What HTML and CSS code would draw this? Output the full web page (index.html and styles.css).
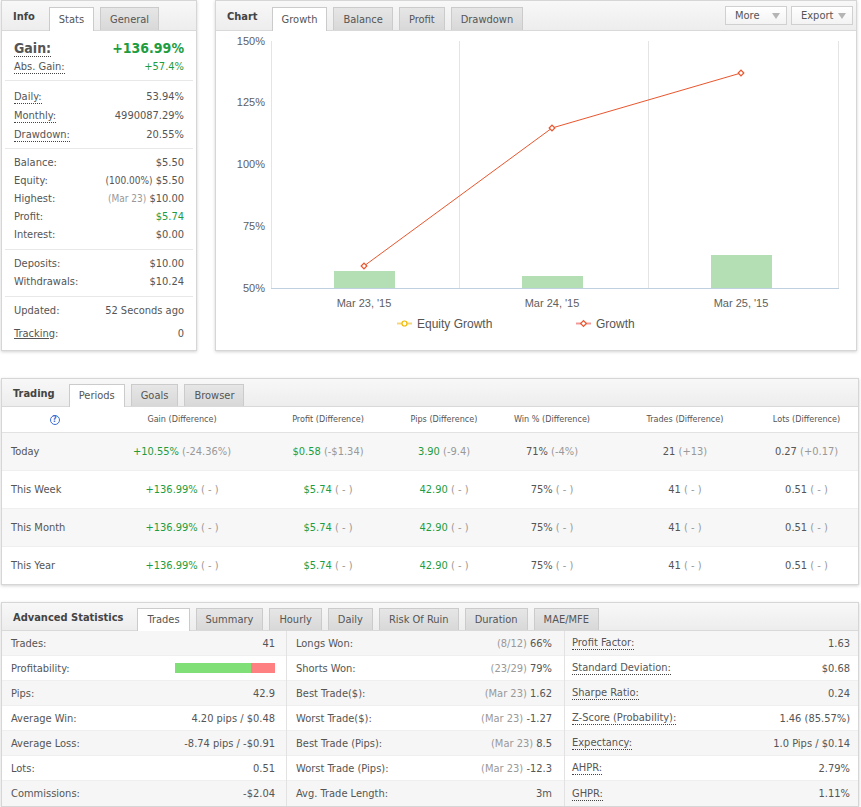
FILE: index.html
```html
<!DOCTYPE html>
<html lang="en">

<head>
    <meta charset="UTF-8">
    <meta name="viewport" content="width=device-width, initial-scale=1.0">
    <title>Account</title>
    <link rel="stylesheet" href="styles.css">
</head>

<body>
    <div class="page">
        <div class="top">
            <div class="panel info">
                <div class="head">
                    <span class="title">Info</span>
                    <span class="tab active">Stats</span>
                    <span class="tab">General</span>
                </div>
                <div class="group g1">
                    <div class="row gain"><span class="lbl dot">Gain:</span><span class="green">+136.99%</span></div>
                    <div class="row"><span class="lbl dot">Abs. Gain:</span><span class="green">+57.4%</span></div>
                </div>
                <div class="group g2">
                    <div class="row"><span class="lbl dot">Daily:</span><span>53.94%</span></div>
                    <div class="row"><span class="lbl dot">Monthly:</span><span>4990087.29%</span></div>
                    <div class="row"><span class="lbl dot">Drawdown:</span><span>20.55%</span></div>
                </div>
                <div class="group">
                    <div class="row"><span class="lbl">Balance:</span><span>$5.50</span></div>
                    <div class="row"><span class="lbl">Equity:</span><span><small>(100.00%)</small> $5.50</span></div>
                    <div class="row"><span class="lbl">Highest:</span><span><small class="muted">(Mar 23)</small> $10.00</span></div>
                    <div class="row"><span class="lbl">Profit:</span><span class="green">$5.74</span></div>
                    <div class="row"><span class="lbl">Interest:</span><span>$0.00</span></div>
                </div>
                <div class="group">
                    <div class="row"><span class="lbl">Deposits:</span><span>$10.00</span></div>
                    <div class="row"><span class="lbl">Withdrawals:</span><span>$10.24</span></div>
                </div>
                <div class="group last">
                    <div class="row"><span class="lbl">Updated:</span><span>52 Seconds ago</span></div>
                    <div class="row track"><span class="lbl under">Tracking</span><span>0</span></div>
                </div>
            </div>

            <div class="panel chart">
                <div class="head">
                    <span class="title">Chart</span>
                    <span class="tab active">Growth</span>
                    <span class="tab">Balance</span>
                    <span class="tab">Profit</span>
                    <span class="tab">Drawdown</span>
                    <div class="tools">
                        <span class="btn">More <i class="arrow"></i></span>
                        <span class="btn">Export <i class="arrow"></i></span>
                    </div>
                </div>
                <svg class="plot" width="640" height="318" viewBox="0 0 640 318">
                    <g stroke="#e4e4e4" stroke-width="1">
                        <line x1="55.5" y1="10" x2="55.5" y2="257" />
                        <line x1="243.5" y1="10" x2="243.5" y2="257" />
                        <line x1="432.5" y1="10" x2="432.5" y2="257" />
                        <line x1="622.5" y1="10" x2="622.5" y2="257" />
                    </g>
                    <g fill="#b4dfb4">
                        <rect x="118" y="240" width="61" height="17" />
                        <rect x="306" y="245" width="61" height="12" />
                        <rect x="495" y="224" width="61" height="33" />
                    </g>
                    <line x1="55" y1="257.5" x2="623" y2="257.5" stroke="#c0d0e0" />
                    <g class="ylab" text-anchor="end">
                        <text x="49" y="14">150%</text>
                        <text x="49" y="75">125%</text>
                        <text x="49" y="137">100%</text>
                        <text x="49" y="199">75%</text>
                        <text x="49" y="261">50%</text>
                    </g>
                    <polyline points="148,235 336,97 525,42" fill="none" stroke="#e8562e" stroke-width="1" />
                    <g fill="#fff" stroke="#e8562e" stroke-width="1.2">
                        <rect x="146" y="233" width="4" height="4" transform="rotate(45 148 235)" />
                        <rect x="334" y="95" width="4" height="4" transform="rotate(45 336 97)" />
                        <rect x="523" y="40" width="4" height="4" transform="rotate(45 525 42)" />
                    </g>
                    <g class="xlab" text-anchor="middle">
                        <text x="148" y="276">Mar 23, '15</text>
                        <text x="336" y="276">Mar 24, '15</text>
                        <text x="525" y="276">Mar 25, '15</text>
                    </g>
                    <g class="legend">
                        <line x1="181" y1="292.5" x2="196" y2="292.5" stroke="#f7d67a" stroke-width="2" />
                        <circle cx="188.5" cy="292.5" r="2.5" fill="#fff" stroke="#f2b900" stroke-width="1.2" />
                        <text x="201" y="297">Equity Growth</text>
                        <line x1="360" y1="292.5" x2="375" y2="292.5" stroke="#f29a9a" stroke-width="2" />
                        <rect x="365.5" y="290.5" width="4" height="4" fill="#fff" stroke="#e8562e" stroke-width="1.2" transform="rotate(45 367.5 292.5)" />
                        <text x="380" y="297">Growth</text>
                    </g>
                </svg>
            </div>
        </div>

        <div class="panel trading">
            <div class="head small">
                <span class="title">Trading</span>
                <span class="tab active">Periods</span>
                <span class="tab">Goals</span>
                <span class="tab">Browser</span>
            </div>
            <table class="periods">
                <colgroup>
                    <col style="width:105px">
                    <col style="width:150px">
                    <col style="width:142px">
                    <col style="width:90px">
                    <col style="width:126px">
                    <col style="width:140px">
                    <col style="width:103px">
                </colgroup>
                <thead>
                    <tr>
                        <th><span class="help">?</span></th>
                        <th>Gain (Difference)</th>
                        <th>Profit (Difference)</th>
                        <th>Pips (Difference)</th>
                        <th>Win % (Difference)</th>
                        <th>Trades (Difference)</th>
                        <th>Lots (Difference)</th>
                    </tr>
                </thead>
                <tbody>
                    <tr>
                        <td>Today</td>
                        <td><span class="green">+10.55%</span> <span class="muted">(-24.36%)</span></td>
                        <td><span class="green">$0.58</span> <span class="muted">(-$1.34)</span></td>
                        <td><span class="green">3.90</span> <span class="muted">(-9.4)</span></td>
                        <td>71% <span class="muted">(-4%)</span></td>
                        <td>21 <span class="muted">(+13)</span></td>
                        <td>0.27 <span class="muted">(+0.17)</span></td>
                    </tr>
                    <tr>
                        <td>This Week</td>
                        <td><span class="green">+136.99%</span> <span class="muted">( - )</span></td>
                        <td><span class="green">$5.74</span> <span class="muted">( - )</span></td>
                        <td><span class="green">42.90</span> <span class="muted">( - )</span></td>
                        <td>75% <span class="muted">( - )</span></td>
                        <td>41 <span class="muted">( - )</span></td>
                        <td>0.51 <span class="muted">( - )</span></td>
                    </tr>
                    <tr>
                        <td>This Month</td>
                        <td><span class="green">+136.99%</span> <span class="muted">( - )</span></td>
                        <td><span class="green">$5.74</span> <span class="muted">( - )</span></td>
                        <td><span class="green">42.90</span> <span class="muted">( - )</span></td>
                        <td>75% <span class="muted">( - )</span></td>
                        <td>41 <span class="muted">( - )</span></td>
                        <td>0.51 <span class="muted">( - )</span></td>
                    </tr>
                    <tr>
                        <td>This Year</td>
                        <td><span class="green">+136.99%</span> <span class="muted">( - )</span></td>
                        <td><span class="green">$5.74</span> <span class="muted">( - )</span></td>
                        <td><span class="green">42.90</span> <span class="muted">( - )</span></td>
                        <td>75% <span class="muted">( - )</span></td>
                        <td>41 <span class="muted">( - )</span></td>
                        <td>0.51 <span class="muted">( - )</span></td>
                    </tr>
                </tbody>
            </table>
        </div>

        <div class="panel advanced">
            <div class="head small">
                <span class="title">Advanced Statistics</span>
                <span class="tab active">Trades</span>
                <span class="tab">Summary</span>
                <span class="tab">Hourly</span>
                <span class="tab">Daily</span>
                <span class="tab">Risk Of Ruin</span>
                <span class="tab">Duration</span>
                <span class="tab">MAE/MFE</span>
            </div>
            <div class="stats">
                <div class="col">
                    <div class="line"><span>Trades:</span><span>41</span></div>
                    <div class="line"><span>Profitability:</span><span class="bar"><i class="win"></i><i class="loss"></i></span></div>
                    <div class="line"><span>Pips:</span><span>42.9</span></div>
                    <div class="line"><span>Average Win:</span><span>4.20 pips / $0.48</span></div>
                    <div class="line"><span>Average Loss:</span><span>-8.74 pips / -$0.91</span></div>
                    <div class="line"><span>Lots:</span><span>0.51</span></div>
                    <div class="line"><span>Commissions:</span><span>-$2.04</span></div>
                </div>
                <div class="col">
                    <div class="line"><span>Longs Won:</span><span><span class="muted">(8/12)</span> 66%</span></div>
                    <div class="line"><span>Shorts Won:</span><span><span class="muted">(23/29)</span> 79%</span></div>
                    <div class="line"><span>Best Trade($):</span><span><span class="muted">(Mar 23)</span> 1.62</span></div>
                    <div class="line"><span>Worst Trade($):</span><span><span class="muted">(Mar 23)</span> -1.27</span></div>
                    <div class="line"><span>Best Trade (Pips):</span><span><span class="muted">(Mar 23)</span> 8.5</span></div>
                    <div class="line"><span>Worst Trade (Pips):</span><span><span class="muted">(Mar 23)</span> -12.3</span></div>
                    <div class="line"><span>Avg. Trade Length:</span><span>3m</span></div>
                </div>
                <div class="col">
                    <div class="line"><span class="dot">Profit Factor:</span><span>1.63</span></div>
                    <div class="line"><span class="dot">Standard Deviation:</span><span>$0.68</span></div>
                    <div class="line"><span class="dot">Sharpe Ratio:</span><span>0.24</span></div>
                    <div class="line"><span class="dot">Z-Score (Probability):</span><span>1.46 (85.57%)</span></div>
                    <div class="line"><span class="dot">Expectancy:</span><span>1.0 Pips / $0.14</span></div>
                    <div class="line"><span class="dot">AHPR:</span><span>2.79%</span></div>
                    <div class="line"><span class="dot">GHPR:</span><span>1.11%</span></div>
                </div>
            </div>
        </div>
    </div>
</body>

</html>
```

FILE: styles.css
```css
* {
    margin: 0;
    padding: 0;
    box-sizing: border-box;
}

body {
    font-family: "DejaVu Sans Condensed", "DejaVu Sans", sans-serif;
    font-stretch: condensed;
    font-size: 11px;
    color: #555;
    background: #fff;
}

.page {
    width: 861px;
    padding: 0 2px 0 1px;
}

.top {
    display: flex;
    gap: 18px;
    align-items: flex-start;
}

.panel {
    background: #fff;
    border: 1px solid #d6d6d6;
    box-shadow: 0 1px 3px rgba(0, 0, 0, .18);
}

.info {
    width: 196px;
    height: 351px;
}

.chart {
    width: 642px;
    height: 351px;
}

/* panel header with tabs */
.head {
    display: flex;
    align-items: flex-end;
    height: 30px;
    padding-left: 11px;
    background: linear-gradient(#f8f8f8, #ededed);
    border-bottom: 1px solid #d9d9d9;
}

.head.small {
    height: 28px;
}

.title {
    line-height: 24px;
    margin-bottom: 1px;
    font-weight: bold;
    color: #444;
    margin-right: 14px;
}

.head.small .title {
    line-height: 22px;
}

.tab {
    height: 23px;
    line-height: 23px;
    padding: 0 9px;
    margin-right: 6px;
    background: linear-gradient(#e6e6e6, #d8d8d8);
    border: 1px solid #cbcbcb;
    border-bottom: 0;
    color: #555;
}

.head.small .tab {
    height: 22px;
    line-height: 22px;
}

.tab.active {
    background: #fff;
    height: 24px;
    margin-bottom: -1px;
}

.head.small .tab.active {
    height: 23px;
}

.tools {
    display: flex;
    gap: 4px;
    margin-left: auto;
    align-self: center;
    margin-right: 3px;
}

.btn {
    display: flex;
    align-items: center;
    justify-content: space-between;
    width: 62px;
    height: 19px;
    padding: 0 6px 0 9px;
    background: linear-gradient(#fff, #f3f3f3);
    border: 1px solid #d0d0d0;
    color: #555;
}

.arrow {
    width: 0;
    height: 0;
    border-left: 4px solid transparent;
    border-right: 4px solid transparent;
    border-top: 6px solid #b5b5b5;
}

/* info panel */
.group {
    padding: 5px 0;
    margin: 0 3px;
    border-bottom: 1px solid #e8e8e8;
}

.group.g1 {
    padding: 7px 0 4px;
}

.group.g2 {
    padding: 6px 0 4px;
}

.group.g2 .row {
    line-height: 19px;
}

.group.last {
    border-bottom: 0;
}

.row {
    display: flex;
    justify-content: space-between;
    line-height: 18px;
    padding: 0 9px;
}

.row.gain {
    font-size: 14px;
    font-weight: bold;
    line-height: 20px;
}

.row.track {
    margin-top: 5px;
}

.lbl {
    color: #555;
}

.dot {
    border-bottom: 1px dotted #444;
}

.row .dot {
    line-height: 13px;
    align-self: center;
}

.row.gain .dot {
    line-height: 16px;
}

.under {
    text-decoration: underline;
}

.under::after {
    content: ":";
    display: inline-block;
}

small {
    font-size: 10px;
}

.green {
    color: #1e9d3f;
}

.muted {
    color: #999;
}

/* chart */
.plot {
    display: block;
    font-family: "Liberation Sans", Arial, sans-serif;
}

.ylab text,
.xlab text {
    font-size: 11px;
    fill: #606060;
}

.legend text {
    font-size: 12px;
    fill: #555;
}

/* trading */
.trading {
    width: 858px;
    margin-top: 27px;
}

.periods {
    width: 856px;
    border-collapse: collapse;
    table-layout: fixed;
}

.periods th {
    height: 25px;
    font-size: 9px;
    font-weight: normal;
    color: #555;
    border-bottom: 1px solid #e2e2e2;
}

.periods td {
    height: 38px;
    text-align: center;
    border-bottom: 1px solid #efefef;
}

.periods td:first-child {
    text-align: left;
    padding-left: 9px;
}

.periods tbody tr:nth-child(odd) {
    background: #f7f7f7;
}

.periods tbody tr:last-child td {
    border-bottom: 0;
}

.help {
    display: inline-block;
    width: 10px;
    height: 10px;
    line-height: 8px;
    border: 1px solid #3d6fd3;
    border-radius: 50%;
    color: #3d6fd3;
    font-size: 8px;
    font-weight: bold;
    text-align: center;
}

/* advanced statistics */
.advanced {
    width: 858px;
    margin-top: 17px;
}

.stats {
    display: grid;
    grid-template-columns: 284px 278px 1fr;
}

.col+.col {
    border-left: 1px solid #e2e2e2;
}

.line {
    display: flex;
    justify-content: space-between;
    align-items: center;
    height: 25px;
    padding: 0 11px 0 9px;
    border-bottom: 1px solid #efefef;
}

.line:nth-child(odd) {
    background: #f6f6f6;
}

.line:last-child {
    border-bottom: 0;
}

.col:nth-child(2) .line {
    padding-right: 12px;
}

.col:nth-child(3) .line {
    padding: 0 8px 0 7px;
}

.line .dot {
    border-bottom: 1px dotted #444;
    line-height: 13px;
}

.bar {
    display: flex;
    width: 100px;
    height: 10px;
}

.bar .win {
    width: 76px;
    background: #80df76;
}

.bar .loss {
    flex: 1;
    background: #ff8080;
}
```
